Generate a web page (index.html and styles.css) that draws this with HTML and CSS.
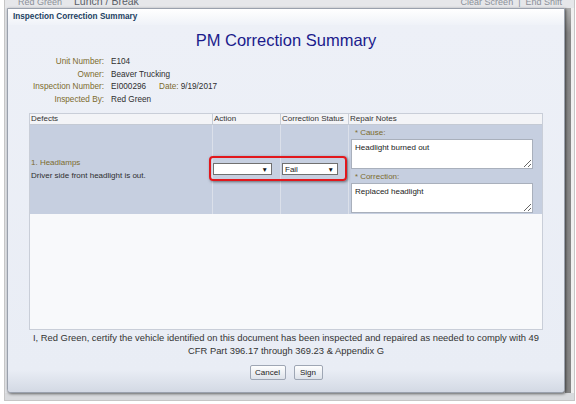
FILE: index.html
```html
<!DOCTYPE html>
<html>
<head>
<meta charset="utf-8">
<title>PM Correction Summary</title>
<link rel="stylesheet" href="styles.css">
</head>
<body>
<div class="shot">
  <div class="topbar">
    <div class="tb-row">
      <span class="tb-name">Red Green</span>
      <span class="tb-status">Lunch / Break</span>
      <span class="tb-links">Clear Screen &nbsp;|&nbsp; End Shift</span>
    </div>
  </div>
  <div class="mid">
    <div class="leftpad"></div>
    <div class="dialog">
      <div class="dlg-head">Inspection Correction Summary</div>
      <div class="dlg-body">
        <h1 class="title">PM Correction Summary</h1>
        <div class="info">
          <div class="lbl">Unit Number:</div><div class="val">E104</div>
          <div class="lbl">Owner:</div><div class="val">Beaver Trucking</div>
          <div class="lbl">Inspection Number:</div><div class="val">EI000296<span class="lbl date-lbl">Date:</span>9/19/2017</div>
          <div class="lbl">Inspected By:</div><div class="val">Red Green</div>
        </div>
        <div class="grid">
          <div class="ghead">
            <div class="c">Defects</div>
            <div class="c sep">Action</div>
            <div class="c sep">Correction Status</div>
            <div class="c sep">Repair Notes</div>
          </div>
          <div class="grow">
            <div class="c defect">
              <div class="d-name">1. Headlamps</div>
              <div>Driver side front headlight is out.</div>
            </div>
            <div class="c sep mid-cell"><div class="sel sel-a"><span></span><span class="arr">&#9660;</span></div></div>
            <div class="c sep mid-cell"><div class="sel sel-b"><span>Fail</span><span class="arr">&#9660;</span></div></div>
            <div class="c sep notes">
              <div class="nlabel"><span class="req">*</span> Cause:</div>
              <textarea class="ta" readonly>Headlight burned out</textarea>
              <div class="nlabel nlabel2"><span class="req">*</span> Correction:</div>
              <textarea class="ta" readonly>Replaced headlight</textarea>
            </div>
            <div class="highlight"></div>
          </div>
          <div class="gempty"></div>
        </div>
        <p class="cert">I, Red Green, certify the vehicle identified on this document has been inspected and repaired as needed to comply with 49<br>CFR Part 396.17 through 369.23 &amp; Appendix G</p>
        <div class="btns">
          <button class="btn btn-cancel">Cancel</button>
          <button class="btn btn-sign">Sign</button>
        </div>
      </div>
    </div>
    <div class="rightstrip"></div>
  </div>
  <div class="bottompad"></div>
</div>
</body>
</html>
```

FILE: styles.css
```css
* { box-sizing: border-box; }
html, body {
  margin: 0;
  padding: 0;
  width: 576px;
  height: 404px;
  overflow: hidden;
  background: #ffffff;
  font-family: "Liberation Sans", Arial, sans-serif;
}
.shot {
  margin-left: 4px;
  width: 571px;
  height: 401px;
  border: 1px solid #c6c6c6;
  border-top: none;
  display: flex;
  flex-direction: column;
  background: #dcdee2;
}
.topbar {
  height: 8px;
  overflow: hidden;
  background: #e6e7ea;
  flex: none;
}
.tb-row {
  display: flex;
  align-items: baseline;
  margin-top: -6px;
  height: 14px;
  line-height: 14px;
  padding-left: 13px;
  padding-right: 12px;
  font-size: 9px;
  color: #8b9099;
}
.tb-status {
  margin-left: 12px;
  font-size: 10.5px;
  color: #5a5f68;
}
.tb-links {
  margin-left: auto;
  color: #8b9099;
}
.mid {
  display: flex;
  height: 385px;
  flex: none;
}
.leftpad {
  width: 2px;
  background: #e1e3e7;
}
.dialog {
  width: 558px;
  border: 1px solid #9aa1ad;
  border-radius: 0 0 4px 4px;
  background: #eaeef6;
  display: flex;
  flex-direction: column;
  box-shadow: 1px 1px 3px rgba(0, 0, 0, 0.55);
  position: relative;
  z-index: 1;
}
.dlg-head {
  height: 16px;
  line-height: 16px;
  padding-left: 5px;
  font-size: 8.2px;
  font-weight: bold;
  color: #1c3f62;
  background: linear-gradient(#ffffff, #eff2f8);
}
.dlg-body {
  flex: 1;
  display: flex;
  flex-direction: column;
  border-radius: 0 0 3px 3px;
  background: linear-gradient(to bottom, #edf0f7 0, #e9edf5 calc(100% - 22px), #d3d9e4 100%);
}
.title {
  margin: 5px 0 0;
  font-size: 16.5px;
  line-height: 20px;
  font-weight: normal;
  color: #1b1b8c;
  text-align: center;
}
.info {
  margin-top: 6px;
  display: grid;
  grid-template-columns: 96px auto;
  column-gap: 7px;
  font-size: 8.2px;
  line-height: 12.7px;
}
.lbl {
  text-align: right;
  color: #7c6b2d;
}
.val {
  color: #2e2e2e;
}
.date-lbl {
  margin-left: 13px;
  margin-right: 2px;
}
.grid {
  margin: 6px 21px 0;
  height: 217px;
  border: 1px solid #c9ced8;
  background: #f8f9fb;
  display: flex;
  flex-direction: column;
}
.ghead, .grow {
  display: grid;
  grid-template-columns: 182px 68px 68px 1fr;
}
.ghead {
  height: 11px;
  line-height: 10px;
  background: #f3f4f7;
  border-bottom: 1px solid #c4cad4;
  font-size: 8px;
  color: #333333;
}
.ghead .c {
  padding-left: 1px;
}
.ghead .sep {
  border-left: 1px solid #c8ced8;
}
.grow {
  height: 89px;
  background: #c6cfe0;
  position: relative;
}
.grow .sep {
  border-left: 1px solid #dbe0ea;
}
.defect {
  display: flex;
  flex-direction: column;
  justify-content: center;
  padding-left: 1px;
  font-size: 8px;
  line-height: 13px;
  color: #2e2e2e;
}
.d-name {
  color: #7c6b2d;
}
.mid-cell {
  display: flex;
  align-items: center;
}
.sel {
  height: 12px;
  border: 1px solid #707070;
  background: #ffffff;
  display: flex;
  justify-content: space-between;
  align-items: center;
  padding: 0 3px 0 2px;
  font-size: 8px;
  color: #222222;
}
.sel-a { width: 59px; }
.sel-b { width: 56px; margin-left: 1px; }
.arr {
  font-size: 6.5px;
  color: #111111;
}
.notes {
  padding: 2px 9px 0 2px;
}
.nlabel {
  height: 12px;
  line-height: 12px;
  padding-left: 4px;
  font-size: 8px;
  color: #7c6b2d;
}
.nlabel2 {
  margin-top: 2px;
}
.req {
  font-size: 7.5px;
}
.ta {
  display: block;
  width: 182px;
  height: 30px;
  margin: 0;
  border: 1px solid #a9b0bc;
  padding: 2px 3px;
  font-family: "Liberation Sans", Arial, sans-serif;
  font-size: 8px;
  line-height: 11px;
  color: #222222;
  background: #ffffff;
  resize: both;
  outline: none;
}
.highlight {
  position: absolute;
  left: 179px;
  top: 31px;
  width: 138px;
  height: 25px;
  border: 2px solid #e2171c;
  border-radius: 4px;
  box-shadow: 1px 1px 3px rgba(0, 0, 0, 0.5);
}
.gempty {
  flex: 1;
}
.cert {
  margin: 1.5px 0 0;
  text-align: center;
  font-size: 9.4px;
  line-height: 13px;
  color: #333333;
}
.btns {
  display: flex;
  justify-content: center;
  gap: 8px;
  margin-top: 8px;
}
.btn {
  height: 15px;
  padding: 0;
  font-family: "Liberation Sans", Arial, sans-serif;
  font-size: 8px;
  color: #222222;
  border: 1px solid #9ea6b4;
  border-radius: 2px;
  background: linear-gradient(#fefefe, #dde2ea);
}
.btn-cancel { width: 36px; }
.btn-sign { width: 29px; }
.rightstrip {
  flex: 1;
  background: linear-gradient(to bottom, #b0b0b0, #878787 25px, #858585);
  border-right: 3px solid #f0f0f0;
}
.bottompad {
  flex: 1;
  background: #d9dbde;
}
```
